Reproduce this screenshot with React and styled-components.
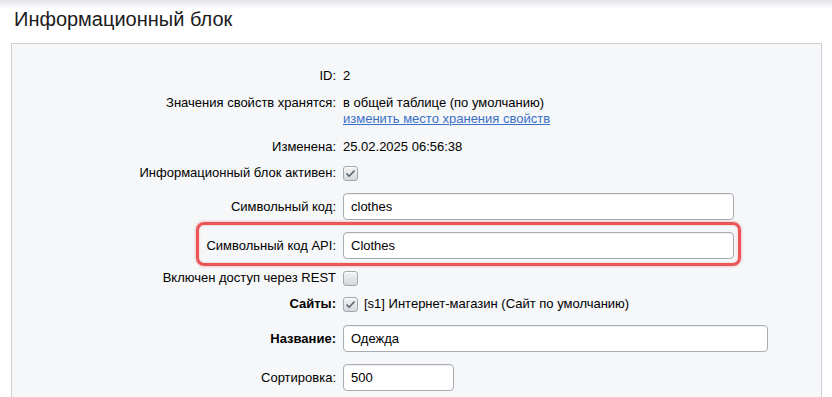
import React from 'react';
import styled, { createGlobalStyle } from 'styled-components';

const GlobalStyle = createGlobalStyle`
  html, body {
    margin: 0;
    padding: 0;
    background: #ffffff;
    overflow: hidden;
  }
  body {
    font-family: "Liberation Sans", Arial, sans-serif;
    font-size: 13px;
    color: #000;
  }
`;

const Page = styled.div`
  position: relative;
  padding: 0 10px 0 11px;
  background: linear-gradient(to bottom, #e3e5e8 0px, #ffffff 9px);
`;

const Title = styled.h1`
  margin: 0;
  padding: 7px 0 0 3px;
  height: 36px;
  font-size: 20px;
  line-height: 24px;
  font-weight: normal;
  color: #1b1b1b;
`;

const Panel = styled.div`
  box-sizing: border-box;
  border: 1px solid #cdd1d5;
  border-bottom: none;
  background: #f5f7f8;
  padding-top: 19px;
  height: 354px;
  overflow: hidden;
`;

const Row = styled.div`
  position: relative;
  display: flex;
  align-items: ${p => (p.$top ? 'flex-start' : 'center')};
  padding: ${p => p.$pt ?? 5}px 0 ${p => p.$pb ?? 5}px;
`;

const Label = styled.div`
  flex: 0 0 324px;
  text-align: right;
  line-height: 16px;
  font-weight: ${p => (p.$bold ? 'bold' : 'normal')};
  color: #000;
`;

const Value = styled.div`
  margin-left: 7px;
  line-height: 16px;
  display: flex;
  align-items: center;
  gap: 6px;
`;

const Stack = styled.div`
  margin-left: 7px;
  line-height: 16px;
`;

const Link = styled.a`
  color: #3a6fc8;
  text-decoration: underline;
  cursor: pointer;
`;

const Input = styled.input`
  box-sizing: border-box;
  width: ${p => p.$w}px;
  height: 27px;
  margin-left: 7px;
  padding: 0 7px;
  border: 1px solid #a7acb3;
  border-radius: 4px;
  background: #fff;
  font-family: "Liberation Sans", Arial, sans-serif;
  font-size: 13px;
  color: #000;
  box-shadow: inset 0 1px 1px rgba(0, 0, 0, 0.06);
  outline: none;
`;

const Box = styled.span`
  box-sizing: border-box;
  display: inline-flex;
  align-items: center;
  justify-content: center;
  width: 15px;
  height: 15px;
  border: 1px solid #a4a8ad;
  border-radius: 3px;
  background: linear-gradient(to bottom, #f2f3f4, #d5d8db);
  box-shadow: inset 0 1px 0 #ffffff;
`;

const Highlight = styled.span`
  position: absolute;
  left: 184px;
  top: -4px;
  width: 545px;
  height: 44px;
  box-sizing: border-box;
  border: 3px solid #ea5658;
  border-radius: 8px;
  box-shadow: 0 0 3px rgba(234, 86, 88, 0.55), inset 0 0 2px rgba(234, 86, 88, 0.45);
  pointer-events: none;
`;

const Check = ({ checked }) => (
  <Box>
    {checked && (
      <svg width="11" height="9" viewBox="0 0 11 9">
        <path d="M1.5 4.5 L4.2 7.2 L9.5 1.5" fill="none" stroke="#566470" strokeWidth="1.6" />
      </svg>
    )}
  </Box>
);

export default function App() {
  return (
    <Page>
      <GlobalStyle />
      <Title>Информационный блок</Title>
      <Panel>
        <Row>
          <Label>ID:</Label>
          <Value>2</Value>
        </Row>
        <Row $top $pt={6} $pb={7}>
          <Label>Значения свойств хранятся:</Label>
          <Stack>
            <div>в общей таблице (по умолчанию)</div>
            <Link>изменить место хранения свойств</Link>
          </Stack>
        </Row>
        <Row>
          <Label>Изменена:</Label>
          <Value>25.02.2025 06:56:38</Value>
        </Row>
        <Row>
          <Label>Информационный блок активен:</Label>
          <Value><Check checked /></Value>
        </Row>
        <Row $pt={7} $pb={6}>
          <Label>Символьный код:</Label>
          <Input $w={391} defaultValue="clothes" />
        </Row>
        <Row $pt={6} $pb={6}>
          <Highlight />
          <Label>Символьный код API:</Label>
          <Input $w={391} defaultValue="Clothes" />
        </Row>
        <Row>
          <Label>Включен доступ через REST</Label>
          <Value><Check /></Value>
        </Row>
        <Row>
          <Label $bold>Сайты:</Label>
          <Value><Check checked />[s1] Интернет-магазин (Сайт по умолчанию)</Value>
        </Row>
        <Row $pt={8} $pb={6}>
          <Label $bold>Название:</Label>
          <Input $w={425} defaultValue="Одежда" />
        </Row>
        <Row $pt={6} $pb={6}>
          <Label>Сортировка:</Label>
          <Input $w={111} defaultValue="500" />
        </Row>
      </Panel>
    </Page>
  );
}
